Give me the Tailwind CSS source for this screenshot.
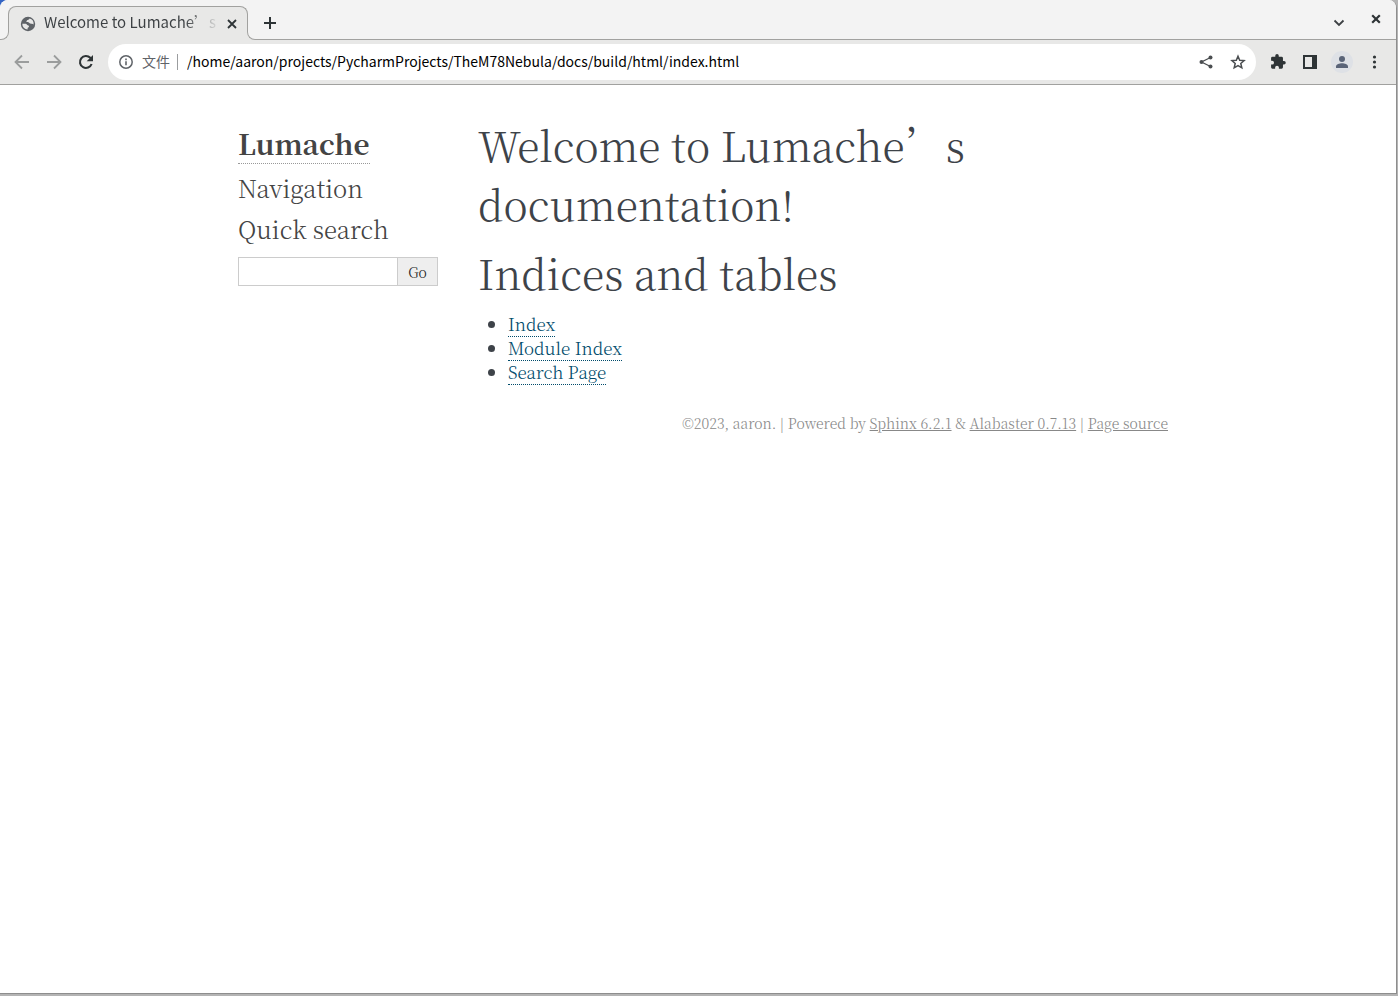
<!DOCTYPE html>
<html lang="zh-CN">
<head>
<meta charset="utf-8">
<title>Welcome to Lumache’s documentation!</title>
<script src="https://cdn.jsdelivr.net/npm/@tailwindcss/browser@4"></script>
</head>
<body class="bg-[#b4b4b4] font-['Noto_Sans_CJK_SC',sans-serif]">
<div class="relative h-screen bg-[#b4b4b4] pr-px pb-0.5">
<div class="absolute top-0 left-0 size-2 bg-[#3465c4]"></div>
<div class="relative flex h-full flex-col overflow-hidden rounded-tl-lg rounded-tr-lg border-r border-b border-[#8e8e8e] bg-white">

  <header class="shrink-0 bg-[#f3f3f3]">
    <div class="flex h-10 items-end">
      <div class="relative h-2 w-[9px] shrink-0 bg-[#e8e8e7]"><div class="size-full rounded-br-lg border-r border-b border-[#a1a19f] bg-[#f3f3f3]"></div></div>
      <div class="-ml-px flex h-[34px] w-60 items-center rounded-t-lg border border-b-0 border-[#a1a19f] bg-[#e8e8e7] pr-[7px] pl-[11px]">
        <svg class="size-4 shrink-0" viewBox="0 0 16 16"><circle cx="8" cy="8" r="7.200" fill="#5f6368"/><path d="M2.300 7.800h2.900c1 0 1.500.5 2 1.200.7.600 1.800.400 1.800 1.400 0 1-1.400.8-1.400 1.800v1.400A5.600 5.600 0 0 1 2.300 7.800zM9.500 2.600c-.2 1-.9 1.200-1.900 1.300-.9.100-.8 1.300-1.400 1.900.8.700 2.200.2 2.900.9.700.8 1.500 1.300 2.600 1.100.7-.1 1.200.4 1.900.7a5.600 5.600 0 0 0-4.100-5.900z" fill="#e8e8e7"/></svg>
        <span class="ml-2 min-w-0 flex-1 overflow-hidden bg-linear-to-r from-[#3c4043] from-80% to-transparent bg-clip-text pb-1 text-[15px] leading-5 whitespace-nowrap text-transparent">Welcome to Lumache’s documentation!</span>
        <button aria-label="Close tab" class="ml-1 flex size-4 shrink-0 items-center justify-center"><svg class="size-4" viewBox="0 0 16 16"><path d="M4 4l8 8M12 4l-8 8" stroke="#2e3436" stroke-width="1.800"/></svg></button>
      </div>
      <div class="relative -ml-px h-2 w-[9px] shrink-0 bg-[#e8e8e7]"><div class="size-full rounded-bl-lg border-b border-l border-[#a1a19f] bg-[#f3f3f3]"></div></div>
      <div class="flex h-10 flex-1 items-center border-b border-[#a1a19f] pt-1.5 pr-3 pl-1">
        <button aria-label="New tab" class="flex size-5 items-center justify-center"><svg class="size-4" viewBox="0 0 16 16"><path d="M8 2v12M2 8h12" stroke="#2e3436" stroke-width="2"/></svg></button>
        <span class="flex-1"></span>
        <button aria-label="Search tabs" class="mr-[21px]"><svg class="size-4" viewBox="0 0 16 16"><path d="M3.500 5.500l4.500 4.500L12.500 5.500" fill="none" stroke="#3c4043" stroke-width="1.800"/></svg></button>
        <button aria-label="Close window" class="mb-2"><svg class="size-4" viewBox="0 0 16 16"><path d="M4.200 4.200l7.600 7.600M11.800 4.200l-7.600 7.600" stroke="#2e3436" stroke-width="2.200"/></svg></button>
      </div>
    </div>

    <div class="flex h-[45px] items-center border-b border-[#a1a19f] bg-[#e8e8e7] px-3">
      <button aria-label="Back" class="mr-3"><svg class="size-5" viewBox="0 0 20 20"><path d="M17 10H4M10 3.500L3.500 10l6.500 6.500" fill="none" stroke="#9b9d9d" stroke-width="1.800"/></svg></button>
      <button aria-label="Forward" class="mr-3"><svg class="size-5" viewBox="0 0 20 20"><path d="M3 10h13M10 3.500l6.500 6.500-6.500 6.500" fill="none" stroke="#9b9d9d" stroke-width="1.800"/></svg></button>
      <button aria-label="Reload" class="mr-3"><svg class="size-5" viewBox="0 0 20 20"><path d="M15.600 12A6 6 0 1 1 14.300 5.800L16 7.500" fill="none" stroke="#2e3436" stroke-width="2.100"/><path d="M17 3v6.300h-6.300z" fill="#2e3436"/></svg></button>
      <div class="flex h-9 flex-1 items-center rounded-full bg-white px-2.5 text-sm">
        <svg class="size-4 shrink-0" viewBox="0 0 16 16"><circle cx="8" cy="8" r="6.200" fill="none" stroke="#5f6368" stroke-width="1.500"/><path d="M8 7.200v4M8 4.600v1.600" stroke="#5f6368" stroke-width="1.600"/></svg>
        <span class="ml-2 pb-0.5 text-[#5f6368]">文件</span>
        <span class="mr-2 ml-[7px] h-4 w-px bg-[#9b9d9f]"></span>
        <input aria-label="Address" class="ml-px min-w-0 flex-1 bg-transparent pb-0.5 text-sm text-black outline-none" value="/home/aaron/projects/PycharmProjects/TheM78Nebula/docs/build/html/index.html">
        <button aria-label="Share" class="mr-4"><svg class="size-4" viewBox="0 0 16 16"><path d="M12.500 3.500L3.500 8l9 4.500" fill="none" stroke="#4a4d50" stroke-width="1.300"/><circle cx="12.500" cy="3.500" r="2" fill="#4a4d50"/><circle cx="3.500" cy="8" r="2" fill="#4a4d50"/><circle cx="12.500" cy="12.500" r="2" fill="#4a4d50"/></svg></button>
        <button aria-label="Bookmark this page"><svg class="size-4" viewBox="0 0 16 16"><path d="M8 2.200l1.700 4 4.400.4-3.300 2.900 1 4.300L8 11.600l-3.800 2.200 1-4.300-3.300-2.900 4.400-.4z" fill="none" stroke="#4a4d50" stroke-width="1.500"/></svg></button>
      </div>
      <button aria-label="Extensions" class="ml-3"><svg class="size-5" viewBox="0 0 24 24"><path d="M20.500 11H19V7a2 2 0 0 0-2-2h-4V3.500a2.500 2.500 0 0 0-5 0V5H4a2 2 0 0 0-2 2v3.800h1.500a2.700 2.700 0 0 1 0 5.400H2V20a2 2 0 0 0 2 2h3.800v-1.500a2.700 2.700 0 0 1 5.400 0V22H17a2 2 0 0 0 2-2v-4h1.500a2.500 2.500 0 0 0 0-5z" transform="translate(2 1.500) scale(.84)" fill="#2e3436"/></svg></button>
      <button aria-label="Side panel" class="ml-3"><svg class="size-5" viewBox="0 0 20 20"><path d="M3 3h14v14H3zM5 5v10h7V5z" fill="#2e3436" fill-rule="evenodd"/></svg></button>
      <button aria-label="Profile" class="ml-[11px]"><svg class="size-[22px]" viewBox="0 0 22 22"><circle cx="11" cy="11" r="11" fill="#dee1e6"/><circle cx="11" cy="8" r="3" fill="#5a6478"/><path d="M5 17v-1.500c0-2.200 3.500-3.300 6-3.300s6 1.100 6 3.300V17z" fill="#5a6478"/></svg></button>
      <button aria-label="Menu" class="ml-[11px]"><svg class="size-5" viewBox="0 0 20 20"><g fill="#2e3436"><circle cx="10.500" cy="5" r="1.600"/><circle cx="10.500" cy="10" r="1.600"/><circle cx="10.500" cy="15" r="1.600"/></g></svg></button>
    </div>
  </header>

  <div class="min-h-0 flex-1 overflow-auto font-['Noto_Serif_CJK_SC','Liberation_Serif',serif] font-light text-[#3e4349]">
    <div class="mx-auto mt-[30px] flex max-w-[940px]">
      <aside class="w-[220px] shrink-0 px-2.5 text-[#444]">
        <h1 class="mt-2.5 text-[28px] leading-9 font-bold"><a href="#" class="inline-block border-b border-dotted border-[#999] pb-0.5">Lumache</a></h1>
        <h3 class="mt-2 text-2xl leading-8 font-light">Navigation</h3>
        <h3 class="mt-[9px] text-2xl leading-8 font-light"><label for="q">Quick search</label></h3>
        <form class="mt-3 flex h-[29px] w-[200px]">
          <input id="q" type="text" class="min-w-0 flex-1 border border-[#ccc] bg-white px-1 text-sm outline-none">
          <button type="button" class="w-10 border border-l-0 border-[#ccc] bg-[#eee] text-sm leading-6 text-[#222]">Go</button>
        </form>
      </aside>
      <main class="min-w-0 flex-1 px-[30px]">
        <h1 class="text-[41px] leading-[59px] font-light">Welcome to Lumache’s documentation!</h1>
        <h1 class="mt-2.5 text-[41px] leading-[59px] font-light">Indices and tables</h1>
        <ul class="mt-2.5 ml-[30px] list-disc text-[17px] leading-6">
          <li><a href="#" class="border-b border-dotted border-[#004b6b] text-[#004b6b]">Index</a></li>
          <li><a href="#" class="border-b border-dotted border-[#004b6b] text-[#004b6b]">Module Index</a></li>
          <li><a href="#" class="border-b border-dotted border-[#004b6b] text-[#004b6b]">Search Page</a></li>
        </ul>
      </main>
    </div>
    <footer class="mx-auto mt-[29px] max-w-[940px] text-right text-sm leading-5 text-[#888]">©2023, aaron. | Powered by <a href="#" class="underline">Sphinx 6.2.1</a> &amp; <a href="#" class="underline">Alabaster 0.7.13</a> | <a href="#" class="underline">Page source</a></footer>
  </div>
</div>
</div>
</body>
</html>
